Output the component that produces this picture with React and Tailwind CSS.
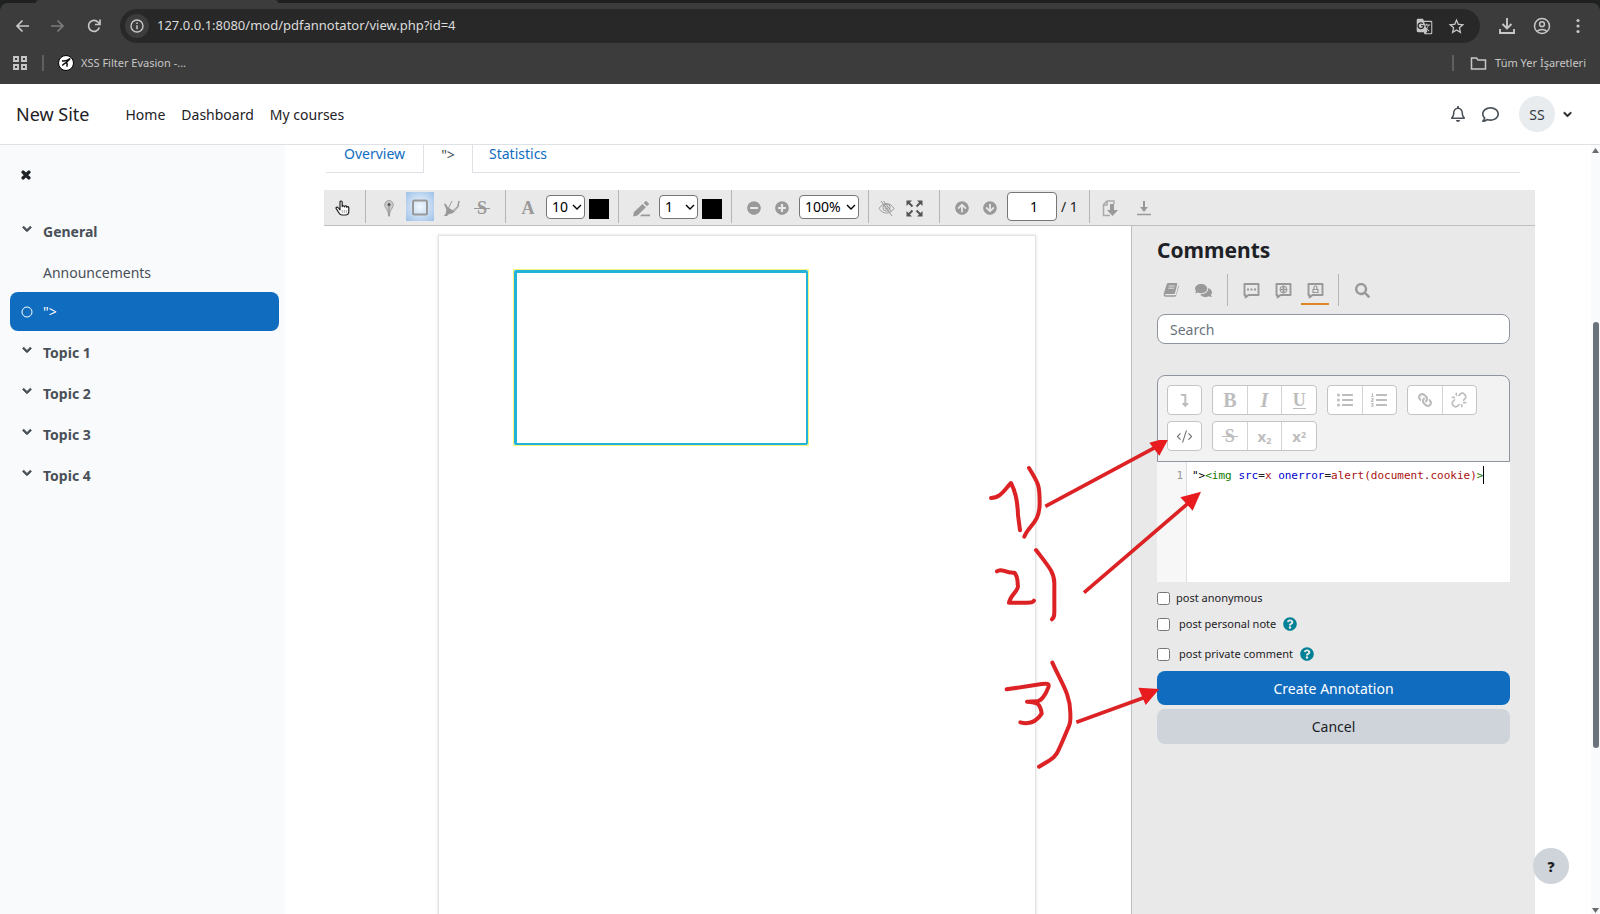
import React from "react";
import {
  FaChevronDown, FaTimes, FaRegBell, FaRegComment, FaListUl, FaListOl,
  FaLink, FaLevelDownAlt, FaQuestionCircle, FaComments, FaSearch,
  FaMinusCircle, FaPlusCircle, FaArrowCircleUp, FaArrowCircleDown,
} from "react-icons/fa";
import { MdGTranslate, MdStarBorder } from "react-icons/md";
import { CodeXml, Unlink } from "lucide-react";

function Svg({ size = 20, box = 20, children, className = "" }) {
  return (
    <svg width={size} height={size} viewBox={`0 0 ${box} ${box}`} fill="none" stroke="currentColor" className={className} aria-hidden="true">
      {children}
    </svg>
  );
}

function ChromeButton({ label, className = "", children }) {
  return (
    <button type="button" aria-label={label} className={`flex h-8 w-8 shrink-0 items-center justify-center rounded-full ${className}`}>
      {children}
    </button>
  );
}

function BrowserChrome() {
  return (
    <div className="h-[84px] shrink-0 bg-[#1f2020] text-[#c7c7c7]">
      <div className="flex h-[3px]">
        <div className="w-9" />
        <div className="w-[242px] rounded-t-sm bg-[#3c3c3c]" />
      </div>
      <div className="h-[81px] rounded-t-lg bg-[#3c3c3c] px-1.5 pt-1.5">
        <div className="flex h-[34px] items-center">
          <ChromeButton label="Back">
            <Svg size={16} box={16}><path d="M15 8H3M8.5 2.5 3 8l5.5 5.5" strokeWidth="1.7" /></Svg>
          </ChromeButton>
          <ChromeButton label="Forward" className="ml-1 text-[#7c7c7c]">
            <Svg size={16} box={16}><path d="M1 8h12M7.5 2.5 13 8l-5.500 5.500" strokeWidth="1.7" /></Svg>
          </ChromeButton>
          <ChromeButton label="Reload" className="ml-1">
            <Svg size={16} box={16}>
              <path d="M13.300 9.500a5.500 5.500 0 1 1-1.200-5.300L13.600 6" strokeWidth="1.7" />
              <path d="M14 1.500v5H9" strokeWidth="1.7" />
            </Svg>
          </ChromeButton>
          <div className="ml-2.5 flex h-[34px] flex-1 items-center rounded-full bg-[#282828] pl-[5px] pr-2">
            <button type="button" aria-label="Site information" className="flex h-6 w-6 items-center justify-center rounded-full bg-[#3c3c3c]">
              <Svg size={14} box={14}>
                <circle cx="7" cy="7" r="6" strokeWidth="1.400" />
                <path d="M7 6.200v4M7 3.500v1.500" strokeWidth="1.500" />
              </Svg>
            </button>
            <input
              aria-label="Address"
              defaultValue="127.0.0.1:8080/mod/pdfannotator/view.php?id=4"
              className="ml-2 min-w-0 flex-1 bg-transparent text-[13px] text-[#dcdcdc] outline-none"
            />
            <ChromeButton label="Translate"><MdGTranslate size={17} /></ChromeButton>
            <ChromeButton label="Bookmark"><MdStarBorder size={19} /></ChromeButton>
          </div>
          <div className="flex items-center pl-[11px]">
            <ChromeButton label="Downloads" className="mr-[3px]">
              <Svg size={18} box={18}>
                <path d="M9 1v10M4.500 7 9 11.500 13.500 7M2 12v4h14v-4" strokeWidth="1.900" />
              </Svg>
            </ChromeButton>
            <ChromeButton label="Profile">
              <Svg size={18} box={18}>
                <circle cx="9" cy="9" r="7.500" strokeWidth="1.500" />
                <circle cx="9" cy="7.200" r="2.400" strokeWidth="1.500" />
                <path d="M4 14.500c2.500-2.800 7.500-2.800 10 0" strokeWidth="1.500" />
              </Svg>
            </ChromeButton>
            <ChromeButton label="Menu" className="ml-1">
              <Svg size={16} box={16}>
                <g fill="currentColor" stroke="none"><circle cx="8" cy="2.500" r="1.600" /><circle cx="8" cy="8" r="1.600" /><circle cx="8" cy="13.500" r="1.600" /></g>
              </Svg>
            </ChromeButton>
          </div>
        </div>
        <div className="flex h-10 items-center pl-1.5 pr-2 text-[11px]">
          <button type="button" aria-label="Apps">
            <Svg size={16} box={16}>
              <path d="M2 2h4v4H2zM10 2h4v4h-4zM2 10h4v4H2zM10 10h4v4h-4z" strokeWidth="1.900" />
            </Svg>
          </button>
          <span className="ml-3.5 h-4 w-0.5 bg-[#5f5f5f]" />
          <a href="#xss" className="ml-3.5 flex items-center gap-[7px]">
            <svg width="16" height="16" viewBox="0 0 16 16" aria-hidden="true">
              <circle cx="8" cy="8" r="7.500" fill="#fff" stroke="#000" />
              <path d="M4 5.800c2.500.6 5 0 8.200-2.300C10 6.500 7 8 4.200 10.500M8.200 6.500c1.200 1.500 1.200 3 .6 5.200" fill="none" stroke="#111" strokeWidth="1.400" />
            </svg>
            XSS Filter Evasion -...
          </a>
          <span className="ml-auto h-4 w-0.5 bg-[#5f5f5f]" />
          <a href="#bookmarks" className="ml-4 flex items-center gap-2">
            <Svg size={17} box={17}><path d="M1.500 3h5l1.500 2h7.500v9h-14z" strokeWidth="1.500" /></Svg>
            Tüm Yer İşaretleri
          </a>
        </div>
      </div>
    </div>
  );
}

function SiteHeader() {
  return (
    <header className="flex h-[61px] shrink-0 items-center border-b border-[#dee2e6] bg-white px-4 text-[#1d2125]">
      <a href="#site" className="text-[18px]">New Site</a>
      <nav className="ml-9 flex gap-4 text-[14px]">
        <a href="#home">Home</a>
        <a href="#dashboard">Dashboard</a>
        <a href="#courses">My courses</a>
      </nav>
      <div className="ml-auto flex items-center text-[#495057]">
        <button type="button" aria-label="Notifications" className="px-2"><FaRegBell size={16} /></button>
        <button type="button" aria-label="Messages" className="px-2"><FaRegComment size={17} /></button>
        <button type="button" aria-label="User menu" className="ml-3 flex items-center gap-2">
          <span className="flex h-9 w-9 items-center justify-center rounded-full bg-[#e9ecef] text-[14px] text-[#343a40]">SS</span>
          <FaChevronDown size={9} stroke="currentColor" strokeWidth={40} className="mr-3 text-[#1d2125]" />
        </button>
      </div>
    </header>
  );
}

function Topic({ children }) {
  return (
    <button type="button" className="flex h-10 items-center gap-[11px] pl-3 text-left font-bold">
      <FaChevronDown size={10} stroke="currentColor" strokeWidth={50} className="-mt-1" />
      {children}
    </button>
  );
}

function Sidebar() {
  return (
    <aside className="w-[285px] shrink-0 bg-[#f8fafc] text-[14px] text-[#495057]">
      <div className="flex h-[66px] items-center pb-1.5 pl-5">
        <button type="button" aria-label="Close course index" className="text-[#1d2125]">
          <FaTimes size={12} stroke="currentColor" strokeWidth={50} />
        </button>
      </div>
      <nav className="flex flex-col gap-px pl-2.5 pr-1.5">
        <Topic>General</Topic>
        <div className="flex flex-col">
          <a href="#announcements" className="flex h-10 items-center pl-[33px]">Announcements</a>
          <a href="#activity" className="flex h-[39px] items-center gap-[10px] rounded-lg bg-[#0f6cbf] pl-[11px] text-white">
            <Svg size={12} box={12}><circle cx="6" cy="6" r="5" strokeWidth="1" /></Svg>
            "&gt;
          </a>
        </div>
        <Topic>Topic 1</Topic>
        <Topic>Topic 2</Topic>
        <Topic>Topic 3</Topic>
        <Topic>Topic 4</Topic>
      </nav>
    </aside>
  );
}

function Tabs() {
  return (
    <nav className="ml-0.5 mr-[15px] flex h-7 text-[14px] text-[#0f6cbf]">
      <a href="#overview" className="flex w-[98px] items-center justify-center border-b border-r border-[#dee2e6] pb-2.5">Overview</a>
      <a href="#view" className="flex w-12 items-center justify-center pb-2.5 text-[#495057]">"&gt;</a>
      <a href="#statistics" className="flex flex-1 items-center border-b border-l border-[#dee2e6] pb-2.5 pl-4">Statistics</a>
    </nav>
  );
}

function Tool({ label, active, children }) {
  return (
    <button
      type="button"
      aria-label={label}
      className={`flex h-[29px] w-7 items-center justify-center pt-[3px] ${active ? "bg-[radial-gradient(#f4f9ff,#9cc0e8)]" : ""}`}
    >
      {children}
    </button>
  );
}

function StruckS() {
  return (
    <span className="relative flex w-4 justify-center font-['Liberation_Serif',serif] text-[18px] font-bold leading-5">
      S
      <span className="absolute inset-x-0 top-[10px] h-px bg-current" />
    </span>
  );
}

function Select({ label, value, options, className }) {
  return (
    <span className={`relative flex ${className}`}>
      <select aria-label={label} defaultValue={value} className="h-6 w-full appearance-none rounded border border-[#767676] bg-white pl-[5px] text-[14px] leading-5 text-black">
        {options.map((o) => <option key={o}>{o}</option>)}
      </select>
      <svg width="10" height="6" viewBox="0 0 10 6" fill="none" stroke="#000" strokeWidth="1.400" className="pointer-events-none absolute right-[3px] top-[9px]" aria-hidden="true">
        <path d="m1 1 4 4 4-4" />
      </svg>
    </span>
  );
}

function Group({ className, last, children }) {
  return <div className={`flex h-[33px] items-center ${last ? "" : "border-r border-[#b5b5b5]"} ${className}`}>{children}</div>;
}

function Toolbar() {
  return (
    <div role="toolbar" className="flex h-9 shrink-0 border-b border-[#bfbfbf] bg-[#e9e9e9] text-[#999]">
      <Group className="pl-1 pr-[9px]">
        <Tool label="Cursor">
          <svg width="15" height="16" viewBox="0 0 15 16" fill="#fff" stroke="#222" strokeWidth="1.200" strokeLinejoin="round" aria-hidden="true">
            <path d="M5 10 3 7.500C2 6.500.6 7.400 1.200 8.600L4 13c.8 1.400 1.500 2 3 2h3.500c2 0 3.300-1.500 3.300-3.500V7.800c0-1.500-1.700-1.600-2-.5 0-1.600-2.100-1.800-2.300-.5-.2-1.400-2-1.400-2.300-.2V2.200C7.200.6 5 .6 5 2.200z" />
            <path d="M7.300 10v3M9.300 10v3M11.300 10v3" stroke="#999" strokeWidth=".8" />
          </svg>
        </Tool>
      </Group>
      <Group className="gap-[3px] px-[9px]">
        <Tool label="Pin">
          <svg width="10" height="17" viewBox="0 0 10 17" aria-hidden="true">
            <path d="M5 .5a4.300 4.300 0 0 1 4.300 4.300C9.300 8 5.800 10 5 16.500 4.200 10 .7 8 .7 4.800A4.300 4.300 0 0 1 5 .5z" fill="#c8c8c8" stroke="#999" strokeWidth=".8" />
            <circle cx="5" cy="4.500" r="1.500" fill="#555" />
            <path d="M5 6v10" stroke="#888" strokeWidth="1" />
          </svg>
        </Tool>
        <Tool label="Rectangle" active>
          <Svg size={18} box={18}><rect x="2" y="1.500" width="14" height="14" rx="1.500" strokeWidth="2" /></Svg>
        </Tool>
        <Tool label="Highlight">
          <svg width="17" height="17" viewBox="0 0 17 17" fill="#999" aria-hidden="true">
            <path d="M1 4l1.500-.5L5 7.500l7 4-3 2-3 .5L4 16H.8l2-2.500.5-4z" />
            <path d="m5.500 8 3.500-7M10 10.500l4.500-4L16 1l-.8 6-4 4.500" fill="none" stroke="#999" />
          </svg>
        </Tool>
        <Tool label="Strikeout"><StruckS /></Tool>
      </Group>
      <Group className="gap-1 pl-2 pr-[9px]">
        <Tool label="Text"><span className="font-['Liberation_Serif',serif] text-[18px] font-bold leading-5">A</span></Tool>
        <Select label="Font size" value="10" options={["8", "10", "12", "14"]} className="w-[39px]" />
        <button type="button" aria-label="Text colour" className="mt-1 h-5 w-5 bg-black" />
      </Group>
      <Group className="gap-1 pl-2 pr-[9px]">
        <Tool label="Pen">
          <svg width="17" height="17" viewBox="0 0 17 17" fill="#999" aria-hidden="true">
            <path d="M1 12 9.500 4l3.300 3.300L4.500 15.500 0 16.500zM10.700 3 13 .8l3.200 3.100L14 6.200zM8.500 14.500H17v1.800H7z" />
          </svg>
        </Tool>
        <Select label="Pen size" value="1" options={["1", "2", "3"]} className="w-[39px]" />
        <button type="button" aria-label="Pen colour" className="mt-1 h-5 w-5 bg-black" />
      </Group>
      <Group className="pl-2 pr-[9px]">
        <Tool label="Zoom out"><FaMinusCircle size={14} /></Tool>
        <Tool label="Zoom in"><FaPlusCircle size={14} /></Tool>
        <Select label="Zoom" value="100%" options={["50%", "100%", "150%"]} className="ml-[3px] w-[60px]" />
      </Group>
      <Group className="pl-[3px] pr-[11px]">
        <Tool label="Hide annotations">
          <Svg size={17} box={17}>
            <path d="M1 8.500c4-6.500 11-6.500 15 0-4 6-11 6-15 0z" />
            <circle cx="8.500" cy="7.500" r="3.600" /><circle cx="8.500" cy="7.500" r="1.500" />
            <path d="M3 1l11 15M5.500 1l7.500 10" />
          </Svg>
        </Tool>
        <Tool label="Full screen">
          <svg width="17" height="17" viewBox="0 0 17 17" fill="#555" stroke="#555" strokeWidth="2" aria-hidden="true">
            <path d="M.5.500h5.500L.5 6zM16.500.500v5.500L11 .500zM.5 16.500V11L6 16.500zM16.500 16.500H11l5.500-5.500z" stroke="none" />
            <path d="m2.500 2.500 4 4M14.500 2.500l-4 4M2.500 14.500l4-4M14.500 14.500l-4-4" />
          </svg>
        </Tool>
      </Group>
      <Group className="pl-2 pr-2">
        <Tool label="Previous page"><FaArrowCircleUp size={14} /></Tool>
        <Tool label="Next page"><FaArrowCircleDown size={14} /></Tool>
        <input aria-label="Page" defaultValue="1" className="ml-[3px] h-[29px] w-[50px] rounded-sm border border-[#767676] bg-white pl-1 text-center text-[14px] text-black" />
        <span className="ml-1 w-5 whitespace-nowrap text-[14px] text-[#222]">/ 1</span>
      </Group>
      <Group className="gap-1.5 pl-1.5" last>
        <Tool label="Download with annotations">
          <svg width="17" height="17" viewBox="0 0 17 17" aria-hidden="true">
            <path d="M12 4V1H5L1.500 4.500v11H8M5 1v4H1.500" fill="none" stroke="#aaa" strokeWidth="1.500" />
            <path d="M8 4h4v6h4l-5.500 6L5 10h3z" fill="#999" />
          </svg>
        </Tool>
        <Tool label="Download">
          <Svg size={16} box={16}><path d="M8 1v9" strokeWidth="2" /><path d="M4 7 8 12l4-5z" fill="currentColor" stroke="none" /><path d="M1 14.500h14" strokeWidth="1.500" /></Svg>
        </Tool>
      </Group>
    </div>
  );
}

function CommentBox({ children }) {
  return (
    <Svg size={17} box={17}>
      <path d="M1.500 2h14v11H5.500l-3 2.500V13h-1z" strokeWidth="1.900" strokeLinejoin="round" />
      {children}
    </Svg>
  );
}

function Filter({ label, active, children }) {
  return (
    <button type="button" aria-label={label} className={`flex h-[29px] w-7 items-center justify-center border-b-2 pt-0.5 ${active ? "border-[#e0861f]" : "border-transparent"}`}>
      {children}
    </button>
  );
}

function EditorGroup({ className, children }) {
  return <div className={`flex h-[30px] divide-x divide-[#d3d3d3] rounded border border-[#c4c4c4] bg-white ${className}`}>{children}</div>;
}

function EditorButton({ label, dark, children }) {
  return (
    <button type="button" aria-label={label} className={`flex flex-1 items-center justify-center font-['Liberation_Serif',serif] text-[20px] leading-6 ${dark ? "text-[#777]" : "text-[#bdbdbd]"}`}>
      {children}
    </button>
  );
}

function Editor() {
  return (
    <div>
      <div className="flex flex-wrap gap-x-2.5 gap-y-1.5 rounded-t-lg border border-[#8f959e] bg-[#f2f2f2] px-[9px] pb-2.5 pt-[9px]">
        <EditorGroup className="w-[35px]"><EditorButton label="More"><FaLevelDownAlt size={13} /></EditorButton></EditorGroup>
        <EditorGroup className="w-[105px]">
          <EditorButton label="Bold"><b>B</b></EditorButton>
          <EditorButton label="Italic"><b><i>I</i></b></EditorButton>
          <EditorButton label="Underline"><span className="border-b border-current text-[18px] font-bold leading-[16px]">U</span></EditorButton>
        </EditorGroup>
        <EditorGroup className="w-[70px]">
          <EditorButton label="Bulleted list"><FaListUl size={16} /></EditorButton>
          <EditorButton label="Numbered list"><FaListOl size={16} /></EditorButton>
        </EditorGroup>
        <EditorGroup className="w-[70px]">
          <EditorButton label="Link"><FaLink size={14} className="-scale-x-100" /></EditorButton>
          <EditorButton label="Unlink"><Unlink size={16} strokeWidth={2.4} /></EditorButton>
        </EditorGroup>
        <div className="flex w-full gap-2.5">
          <EditorGroup className="w-[35px]"><EditorButton label="HTML" dark><CodeXml size={17} strokeWidth={1.6} /></EditorButton></EditorGroup>
          <EditorGroup className="w-[105px]">
            <EditorButton label="Strike"><StruckS /></EditorButton>
            <EditorButton label="Subscript"><b className="font-['Noto_Sans',sans-serif] text-[15px]">x<sub className="text-[9px]">2</sub></b></EditorButton>
            <EditorButton label="Superscript"><b className="font-['Noto_Sans',sans-serif] text-[15px]">x<sup className="text-[9px]">2</sup></b></EditorButton>
          </EditorGroup>
        </div>
      </div>
      <div className="flex h-[120px] bg-white font-['DejaVu_Sans_Mono',monospace] text-[11px] leading-[18px]">
        <div className="w-[30px] border-r border-[#ddd] bg-[#f7f7f7] pr-[3px] pt-[5px] text-right text-[#999]">1</div>
        <div role="textbox" aria-label="Comment source" tabIndex={0} className="flex items-start whitespace-pre pl-[5px] pt-[5px]">
          <span className="text-black">"&gt;</span>
          <span className="text-[#117700]">&lt;img </span>
          <span className="text-[#0000cc]">src</span>=<span className="text-[#aa1111]">x </span>
          <span className="text-[#0000cc]">onerror</span>=<span className="text-[#aa1111]">alert(document.cookie)</span>
          <span className="text-[#117700]">&gt;</span>
          <span className="-mt-px h-[18px] w-px bg-black" />
        </div>
      </div>
    </div>
  );
}

function Check({ id, label, help, className }) {
  return (
    <div className={`flex items-center text-[11px] leading-4 text-[#1d2125] ${className}`}>
      <input id={id} type="checkbox" className="h-[13px] w-[13px]" />
      <label htmlFor={id} className={help ? "ml-[9px]" : "ml-1.5"}>{label}</label>
      {help && <button type="button" aria-label={`Help with ${label}`} className="ml-[7px] text-[#008196]"><FaQuestionCircle size={14} /></button>}
    </div>
  );
}

function Marks() {
  return (
    <svg width="250" height="340" viewBox="0 0 750 1020" fill="none" stroke="#dc2224" strokeWidth="12" strokeLinecap="round" strokeLinejoin="round" className="pointer-events-none absolute -left-[172px] top-[214px] z-10" aria-hidden="true">
      <path d="M93 174c28 0 38-22 60-45 16 30 20 60 21 96l6 46M207 84c30 48 32 54 32 106 0 60-34 66-46 100" />
      <path d="M111 394c14-12 22 6 52 4 14 16 8 32 11 40 0 16-22 26-27 50h54c12 0 18 0 21-6M228 330c40 52 55 68 55 100v84c0 12 0 18-7 24" />
      <path d="M140 748 245 732c16-2 24-2 20 10-8 22-22 44-36 42l-28 1c30 2 40 4 44 36-14 22-34 34-64 26M277 668c28 62 54 96 54 150 0 22 2 26-4 40-34 78-36 92-60 104l-30 18" />
      <g strokeLinecap="butt" strokeWidth="11">
        <path d="M256 199 590 20M372 458 690 185M349 847 555 772" />
      </g>
      <g fill="#e81c1f" stroke="none">
        <path d="M628-8 598 47 568 8zM723 155 698 212 661 172zM598 747 557 795 535 743z" />
      </g>
    </svg>
  );
}

function BookIcon() {
  return (
    <svg width="16" height="16" viewBox="0 0 16 16" aria-hidden="true">
      <path d="M5.500 1h7.700c.8 0 1.200.5 1 1.200L12 11c-.2.700-.8 1-1.500 1H3c-1 0-1.300.8-.8 1.300h9.300c1 0 1.500-.5 1.800-1.500L15.400 3.500c.5.4.5.8.3 1.400l-2.300 8c-.4 1.300-1 1.900-2.300 1.900H2.800C1 14.800.200 13.300.800 11.500L3.500 2.700C3.900 1.500 4.400 1 5.500 1z" fill="#999" />
      <path d="M5.800 4h6M5.200 6.200h6" stroke="#e9e9e9" strokeWidth=".9" />
    </svg>
  );
}

function Comments() {
  return (
    <section className="relative w-[404px] shrink-0 border-l border-[#bfbfbf] bg-[#e9e9e9] pl-[25px] pr-[25px] pt-[9px] text-[#1d2125]">
      <h2 className="text-[21px] font-bold leading-[30px]">Comments</h2>
      <div className="mt-[9px] flex h-8 items-center text-[#999]">
        <Filter label="Page comments"><BookIcon /></Filter>
        <div className="ml-1"><Filter label="All questions"><FaComments size={17} /></Filter></div>
        <div className="ml-2.5 flex h-8 items-center gap-1 border-x border-[#b5b5b5] px-[9px]">
          <Filter label="Public comments"><CommentBox><path d="M4 7.500h2M7.500 7.500h2M11 7.500h2" strokeWidth="2" /></CommentBox></Filter>
          <Filter label="Anonymous comments"><CommentBox><circle cx="8.500" cy="7.500" r="3.500" /><path d="M5 7.500h7M8.500 4v7" /><ellipse cx="8.500" cy="7.500" rx="1.600" ry="3.500" strokeWidth=".7" /></CommentBox></Filter>
          <Filter label="Private comments" active><CommentBox><path d="M6 7.500h5v3H6zM7 7V5.500a1.500 1.500 0 0 1 3 0V7" strokeWidth="1.200" /></CommentBox></Filter>
        </div>
        <div className="ml-[9px]"><Filter label="Search comments"><FaSearch size={15} /></Filter></div>
      </div>
      <input aria-label="Search" placeholder="Search" className="mt-2 block h-[30px] w-full rounded-lg border border-[#8f959e] bg-white px-3 text-[14px] placeholder:text-[#6a737b]" />
      <div className="mt-[31px]"><Editor /></div>
      <Check id="anon" label="post anonymous" className="mt-2" />
      <Check id="note" label="post personal note" help className="mt-2.5" />
      <Check id="private" label="post private comment" help className="mt-3.5" />
      <button type="button" className="mt-[9px] block h-[34px] w-full rounded-lg bg-[#0f6cbf] text-[14px] text-white">Create Annotation</button>
      <button type="button" className="mt-1 block h-[35px] w-full rounded-lg bg-[#ced4da] text-[14px]">Cancel</button>
      <Marks />
    </section>
  );
}

function PdfPage() {
  return (
    <div className="min-w-0 flex-1 pl-[114px] pt-[9px]">
      <div className="relative h-[845px] max-w-[598px] border border-[#e3e3e3] bg-white shadow-[0_0_3px_#ddd]">
        <div className="absolute left-[74px] top-[33px] h-[177px] w-[296px] border border-[#f5f57a]">
          <div className="h-full w-full rounded-xs border-2 border-l-[3px] border-t-[3px] border-[#22b2da]" />
        </div>
      </div>
    </div>
  );
}

export default function App() {
  return (
    <div className="flex h-screen flex-col overflow-hidden bg-white font-['Noto_Sans','Open_Sans',sans-serif]">
      <BrowserChrome />
      <SiteHeader />
      <div className="relative flex min-h-0 flex-1">
        <Sidebar />
        <main className="flex min-w-0 flex-1 flex-col pl-[39px] pr-14">
          <Tabs />
          <div className="mt-[17px] flex min-h-0 flex-1 flex-col">
            <Toolbar />
            <div className="flex min-h-0 flex-1">
              <PdfPage />
              <Comments />
            </div>
          </div>
        </main>
        <div className="flex w-[9px] shrink-0 flex-col items-center bg-[#f8fafc]">
          <svg width="7" height="5" viewBox="0 0 7 5" fill="#6b6b6b" className="mt-[3px] shrink-0" aria-hidden="true"><path d="M3.500 0 7 5H0z" /></svg>
          <div className="mt-[169px] h-[426px] w-1.5 shrink-0 rounded-full bg-[#6a737b]" />
          <svg width="7" height="5" viewBox="0 0 7 5" fill="#6b6b6b" className="mt-auto mb-px shrink-0" aria-hidden="true"><path d="M0 0h7L3.500 5z" /></svg>
        </div>
        <button type="button" aria-label="Help" className="absolute bottom-[30px] right-[31px] flex h-9 w-9 items-center justify-center rounded-full bg-[#ced4da] text-[14px] font-black text-[#1d2125]">?</button>
      </div>
    </div>
  );
}
